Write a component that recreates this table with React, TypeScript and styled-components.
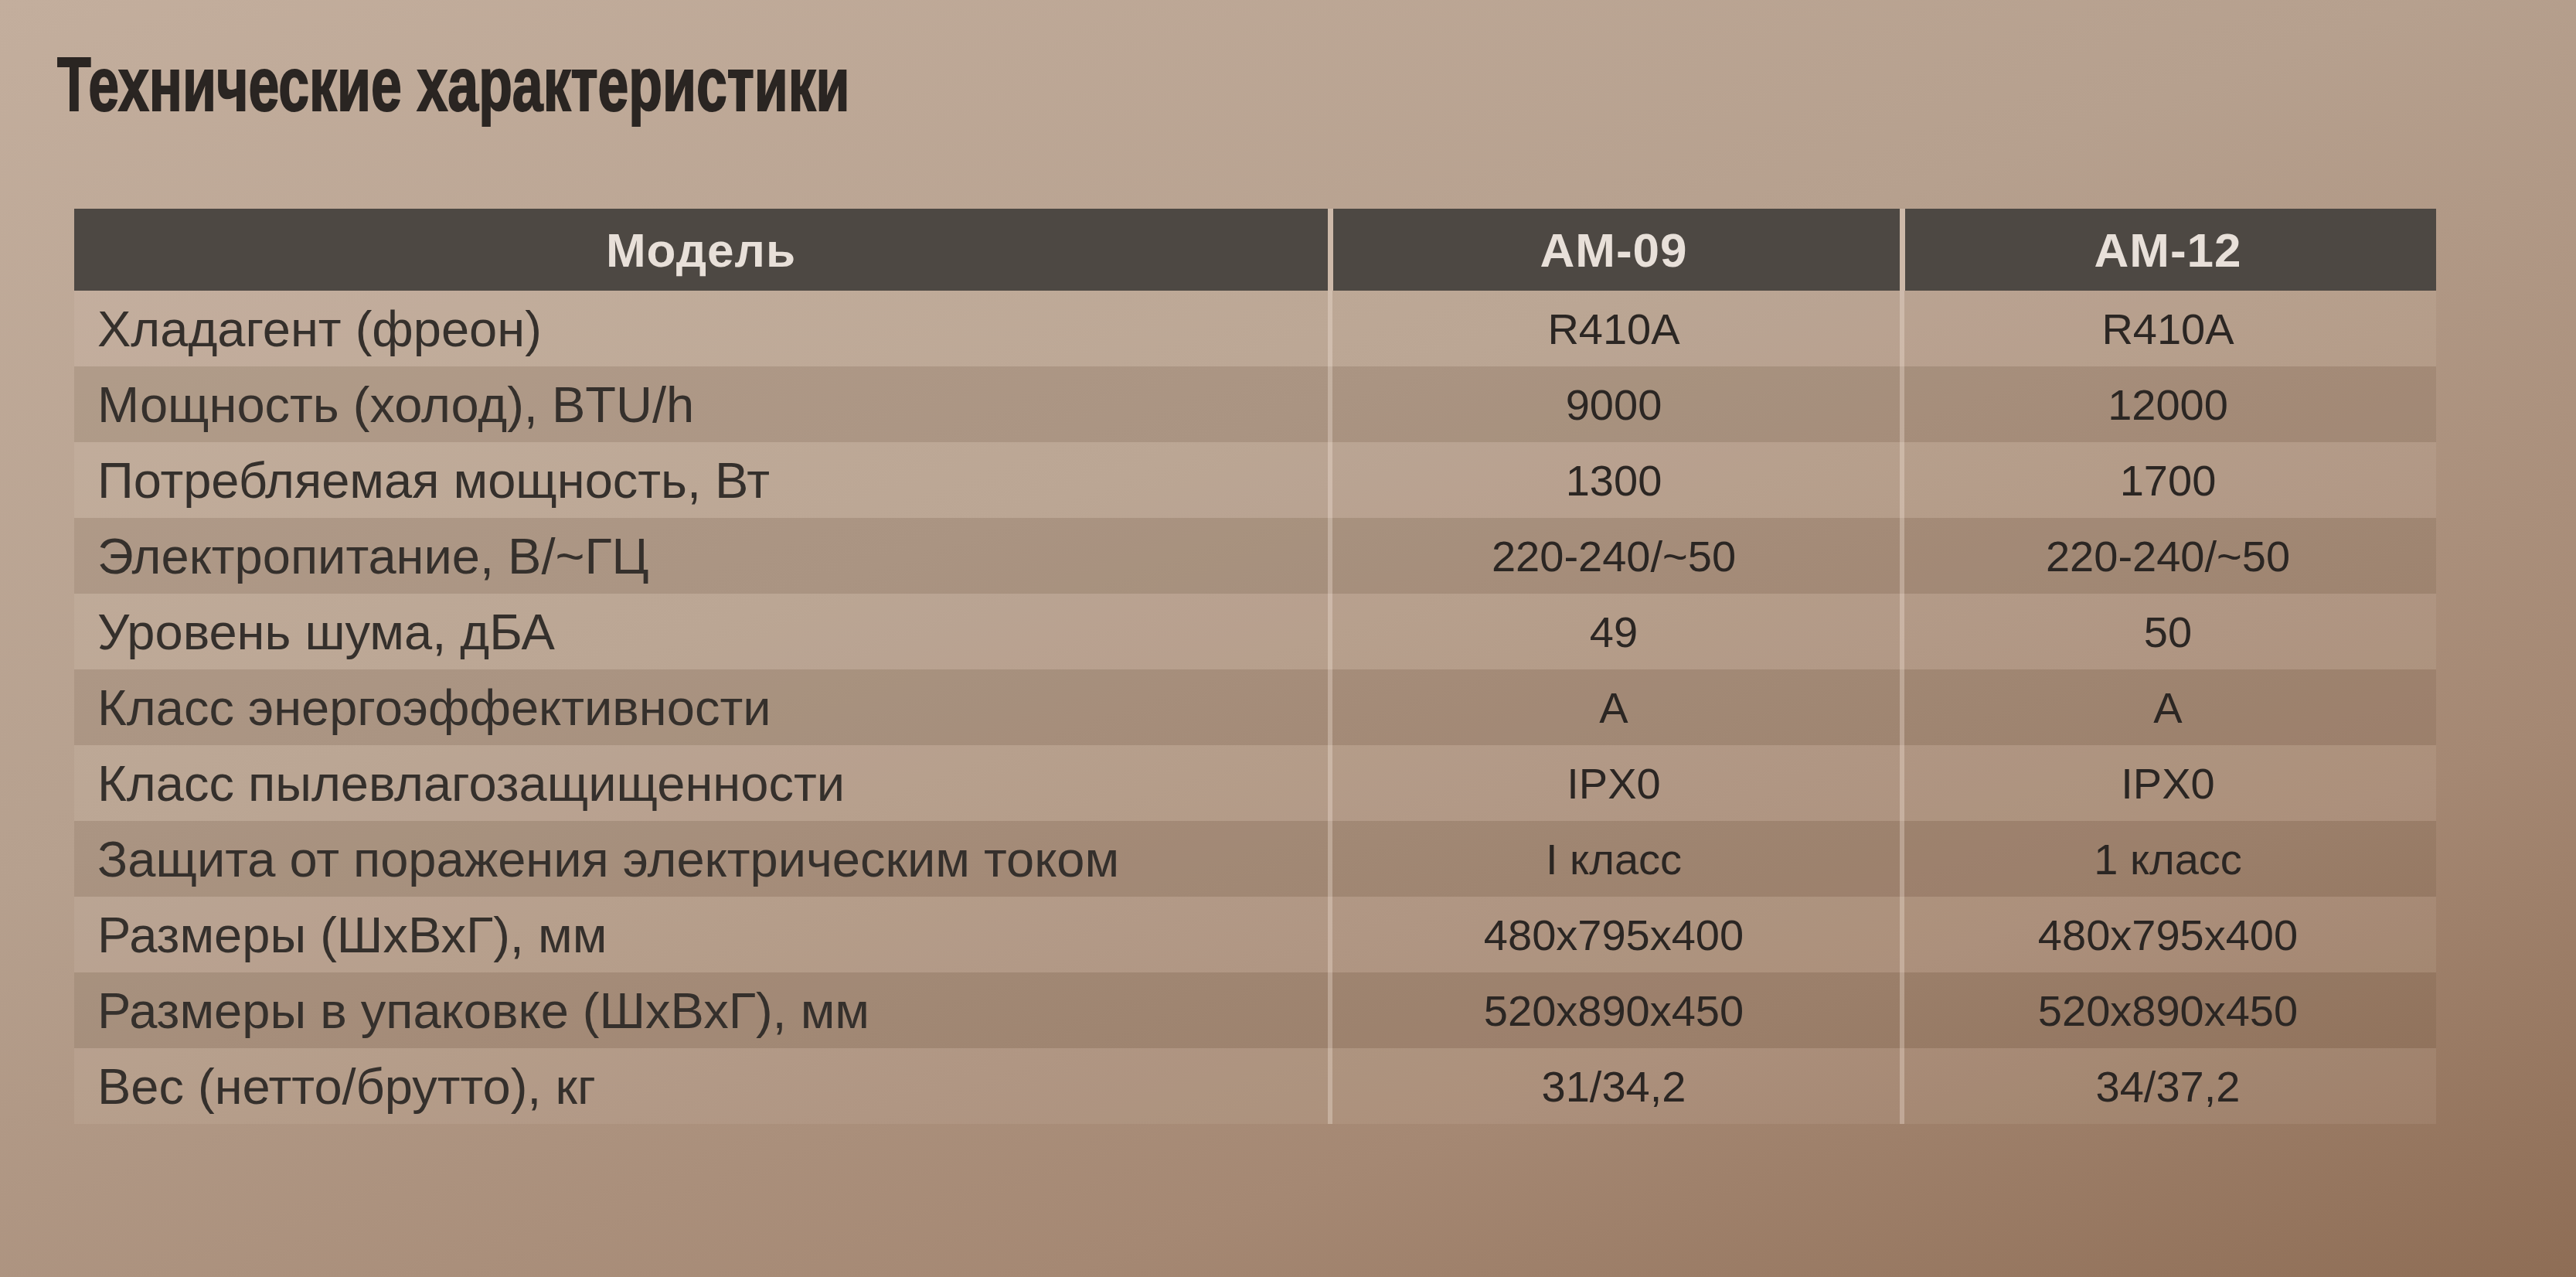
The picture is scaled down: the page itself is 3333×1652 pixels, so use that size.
import styled, { createGlobalStyle } from 'styled-components';

const GlobalStyle = createGlobalStyle`
  html, body {
    margin: 0;
    padding: 0;
  }
  body {
    width: 3333px;
    height: 1652px;
    overflow: hidden;
    background: linear-gradient(160deg, #c3ae9d 0%, #b6a08e 40%, #a58873 75%, #8e6d55 100%);
    font-family: "Liberation Sans", Arial, sans-serif;
  }
`;

const Page = styled.div`
  display: flex;
  flex-direction: column;
  padding: 60px 0 0 74px;
`;

const Title = styled.h1`
  margin: 0 0 112px 0;
  font-family: "Liberation Sans", Arial, sans-serif;
  font-size: 98px;
  font-weight: 700;
  line-height: 1;
  color: #2a2522;
  -webkit-text-stroke: 2px #2a2522;
  transform: scaleX(0.73);
  transform-origin: left center;
  white-space: nowrap;
`;

const Table = styled.div`
  display: grid;
  grid-template-columns: 1622px 740px 694px;
  margin-left: 22px;
  width: 3056px;
`;

const HeadCell = styled.div<{ $sep?: boolean }>`
  display: flex;
  align-items: center;
  justify-content: center;
  height: 106px;
  background: #4d4843;
  box-shadow: ${(p) => (p.$sep ? 'inset 7px 0 0 #cdb9a9' : 'none')};
  color: #e8e0d9;
  font-size: 62px;
  font-weight: 700;
  letter-spacing: 1px;
`;

const Cell = styled.div<{ $dark: boolean; $label?: boolean; $sep?: boolean }>`
  display: flex;
  align-items: center;
  justify-content: ${(p) => (p.$label ? 'flex-start' : 'center')};
  height: 98px;
  padding: 0 ${(p) => (p.$label ? '30px' : '0')};
  background: ${(p) => (p.$dark ? 'rgba(70, 45, 30, 0.1)' : 'rgba(255, 240, 228, 0.08)')};
  box-shadow: ${(p) => (p.$sep ? 'inset 6px 0 0 rgba(255, 242, 232, 0.3)' : 'none')};
  color: ${(p) => (p.$label ? '#35302c' : '#2b2623')};
  font-size: ${(p) => (p.$label ? '65px' : '56px')};
  white-space: nowrap;
`;

const rows: [string, string, string][] = [
  ['Хладагент (фреон)', 'R410A', 'R410A'],
  ['Мощность (холод), BTU/h', '9000', '12000'],
  ['Потребляемая мощность, Вт', '1300', '1700'],
  ['Электропитание, В/~ГЦ', '220-240/~50', '220-240/~50'],
  ['Уровень шума, дБА', '49', '50'],
  ['Класс энергоэффективности', 'A', 'A'],
  ['Класс пылевлагозащищенности', 'IPX0', 'IPX0'],
  ['Защита от поражения электрическим током', 'I класс', '1 класс'],
  ['Размеры (ШхВхГ), мм', '480x795x400', '480x795x400'],
  ['Размеры в упаковке (ШхВхГ), мм', '520x890x450', '520x890x450'],
  ['Вес (нетто/брутто), кг', '31/34,2', '34/37,2'],
];

export default function App() {
  return (
    <>
      <GlobalStyle />
      <Page>
        <Title>Технические характеристики</Title>
        <Table>
          <HeadCell>Модель</HeadCell>
          <HeadCell $sep>AM-09</HeadCell>
          <HeadCell $sep>AM-12</HeadCell>
          {rows.map(([label, a, b], i) => [
            <Cell key={`l${i}`} $dark={i % 2 === 1} $label>
              {label}
            </Cell>,
            <Cell key={`a${i}`} $dark={i % 2 === 1} $sep>
              {a}
            </Cell>,
            <Cell key={`b${i}`} $dark={i % 2 === 1} $sep>
              {b}
            </Cell>,
          ])}
        </Table>
      </Page>
    </>
  );
}
